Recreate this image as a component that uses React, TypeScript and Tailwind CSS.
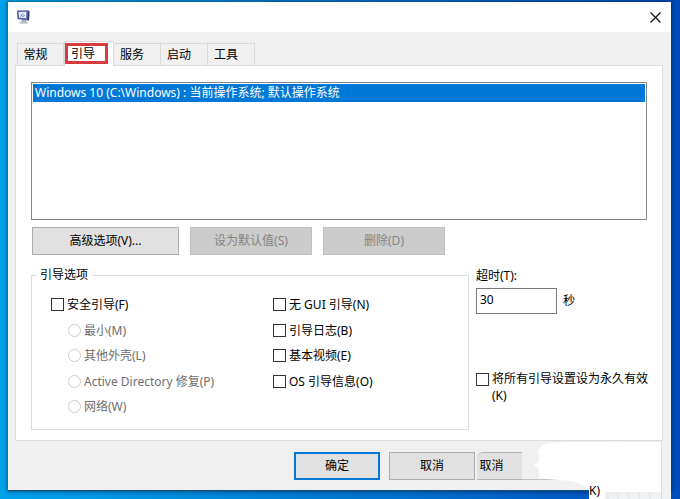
import { useState } from "react";
import clsx from "clsx";

const tabs = ["常规", "引导", "服务", "启动", "工具"];

const safeBootModes = [
  { id: "minimal", label: "最小(M)" },
  { id: "shell", label: "其他外壳(L)" },
  { id: "ad", label: "Active Directory 修复(P)" },
  { id: "network", label: "网络(W)" },
];

const bootFlags = ["无 GUI 引导(N)", "引导日志(B)", "基本视频(E)", "OS 引导信息(O)"];

function MonitorIcon() {
  return (
    <svg width="16" height="16" viewBox="0 0 16 16" aria-hidden="true">
      <ellipse cx="7.500" cy="13.500" rx="4.500" ry="1.600" fill="#d2d2d6" />
      <path d="M6 10h4l1 3.500H5z" fill="#b4b4bd" />
      <path d="M.8 1.500 12.300 1.200 12 11.200 1.600 10.200z" fill="#5a61ae" />
      <path d="M12.300 1.200 13.600 2.400 13 11.800 11.600 11.200z" fill="#292d66" />
      <path d="M2.600 3 10.400 2.800 10.200 9.200 3.200 8.800z" fill="#e4edfc" />
      <path d="M4.500 7.500 7 4.500M6.500 8 8.500 6" stroke="#5263bd" strokeWidth="1" />
    </svg>
  );
}

function CheckBox({ label, className }: { label: string; className?: string }) {
  return (
    <label className={clsx("flex items-center gap-[3px]", className)}>
      <input
        type="checkbox"
        className="size-[13px] shrink-0 appearance-none border border-[#333] bg-white checked:bg-[#0078d7]"
      />
      {label}
    </label>
  );
}

function PushButton({
  label,
  className,
  disabled,
}: {
  label: string;
  className?: string;
  disabled?: boolean;
}) {
  return (
    <button
      type="button"
      disabled={disabled}
      className={clsx(
        "h-7 border text-center",
        disabled
          ? "border-[#bfbfbf] bg-[#ccc] text-[#838383]"
          : "bg-[#e1e1e1] text-black",
        className,
      )}
    >
      {label}
    </button>
  );
}

function TabBar() {
  const [active, setActive] = useState(1);

  return (
    <div className="flex items-end pl-[9px]" role="tablist">
      {tabs.map((tab, i) => (
        <button
          key={tab}
          type="button"
          role="tab"
          aria-selected={i === active}
          onClick={() => setActive(i)}
          className={clsx(
            "border-t border-r border-[#d9d9d9]",
            i === 0 && "border-l",
            i === active
              ? "relative z-10 -mb-px h-[25px] w-[50px] border-l bg-white pb-px"
              : "h-[22px] w-[47px] bg-[#f0f0f0] pr-2.5",
          )}
        >
          {i === active ? (
            <span className="flex h-[21px] w-[43px] items-center border-[3px] border-[#d83b3e] pl-[3px] leading-4">
              {tab}
            </span>
          ) : (
            tab
          )}
        </button>
      ))}
    </div>
  );
}

function BootOptions() {
  return (
    <fieldset className="min-w-0 flex-1 border border-[#dcdcdc] pr-2 pb-2.5 pl-[19px]">
      <legend className="-ml-[15px] px-1 leading-4">引导选项</legend>
      <div className="grid grid-cols-[222px_1fr] pt-[9px]">
        <div>
          <CheckBox label="安全引导(F)" className="mb-px h-[25px]" />
          {safeBootModes.map((mode, i) => (
            <label
              key={mode.id}
              className={clsx(
                "ml-[17px] flex h-[25px] items-center gap-[3px] text-[#6d6d6d]",
                i === 1 && "mb-px",
              )}
            >
              <input
                type="radio"
                name="safeboot"
                value={mode.id}
                disabled
                className="size-[13px] shrink-0 appearance-none rounded-full border border-[#ccc] bg-white"
              />
              {mode.label}
            </label>
          ))}
        </div>
        <div>
          {bootFlags.map((flag, i) => (
            <CheckBox
              key={flag}
              label={flag}
              className={i % 2 === 0 ? "mb-px h-[25px]" : "h-[25px]"}
            />
          ))}
        </div>
      </div>
    </fieldset>
  );
}

function TimeoutColumn() {
  return (
    <div className="-mr-2 w-[186px] shrink-0 pl-[7px]">
      <label htmlFor="timeout" className="block leading-[17px]">
        超时(T):
      </label>
      <div className="mt-1 flex items-center gap-1.5">
        <input
          id="timeout"
          type="text"
          defaultValue="30"
          className="h-[26px] w-[81px] border border-[#7a7a7a] bg-white px-[3px] pb-1"
        />
        <span>秒</span>
      </div>
      <label className="mt-14 flex items-start gap-[3px] leading-[17px]">
        <input
          type="checkbox"
          className="mt-[3px] size-[13px] shrink-0 appearance-none border border-[#333] bg-white checked:bg-[#0078d7]"
        />
        <span>将所有引导设置设为永久有效 (K)</span>
      </label>
    </div>
  );
}

// White patch that hides the lower right corner of the window
function Smudge() {
  return (
    <svg
      className="pointer-events-none absolute right-0 bottom-0 z-20"
      width="220"
      height="59"
      viewBox="0 0 220 59"
      aria-hidden="true"
    >
      <path d="M129 49h82v10h-82z" fill="#f0f1f2" />
      <path d="M129 49h16v10h-16z" fill="#fff" />
      <path
        d="M148 53v6M158 53v6M169 53v6M179 53v6M190 53v6"
        stroke="#dfe2e4"
        strokeWidth="1"
      />
      <path d="M62 39.500h52" stroke="#c4c4c4" strokeWidth="1" />
      <path
        d="M88 3Q120 1 202 2V52H145L128 48Q118 43 112 41Q96 40 78 38Q82 30 74 25Q82 20 78 12Q80 4 88 3z"
        fill="#fff"
      />
      <path d="M201.500 2v57" stroke="#dedede" strokeWidth="1" />
    </svg>
  );
}

function App() {
  return (
    <main className="relative flex min-h-screen flex-col overflow-hidden bg-linear-to-r from-[#00a4ec] via-[#0078d0] to-[#004cbe] pt-0.5 pr-[9px] pb-2 pl-2 font-['Noto_Sans','Noto_Sans_CJK_SC',sans-serif] text-xs text-black">
      <div className="flex flex-1 flex-col border-b border-[#14506e] bg-[#f0f0f0] shadow-[0_0_4px_1px_rgba(0,20,50,0.5)]">
        <header className="flex h-[30px] items-center justify-between bg-white pr-[9px] pl-2">
          <MonitorIcon />
          <button type="button" aria-label="关闭" className="p-px">
            <svg width="11" height="11" viewBox="0 0 11 11">
              <path d="M.5.5l10 10M10.500.5l-10 10" stroke="#111" strokeWidth="1.200" />
            </svg>
          </button>
        </header>

        <div className="pt-[9px]">
          <TabBar />
          <div className="mr-2 ml-[7px] border border-[#dcdcdc] bg-white px-[15px] pt-4 pb-2.5">
            <ul className="h-[138px] border border-[#828790] p-px">
              <li className="h-[18px] bg-[#0078d7] pl-0.5 leading-[18px] text-white">
                Windows 10 (C:\Windows) : 当前操作系统; 默认操作系统
              </li>
            </ul>
            <div className="mt-[7px] flex gap-[11px] pl-px">
              <PushButton label="高级选项(V)..." className="w-[147px] border-[#adadad]" />
              <PushButton label="设为默认值(S)" className="w-[122px]" disabled />
              <PushButton label="删除(D)" className="w-[122px]" disabled />
            </div>
            <div className="mt-3 flex">
              <BootOptions />
              <TimeoutColumn />
            </div>
          </div>
        </div>

        <footer className="flex justify-end pt-[11px] pr-[149px] pb-[9px]">
          <PushButton label="确定" className="mr-[9px] w-[86px] border-2 border-[#0078d7]" />
          <PushButton label="取消" className="mr-0.5 w-[86px] border-[#adadad]" />
          <PushButton
            label="取消"
            className="w-[45px] rounded-tl-md border-x-0 border-[#b4b4b4] pr-4"
          />
        </footer>
      </div>
      <Smudge />
      <span className="absolute right-20 bottom-0 z-20 leading-4">K)</span>
    </main>
  );
}

export default App;
